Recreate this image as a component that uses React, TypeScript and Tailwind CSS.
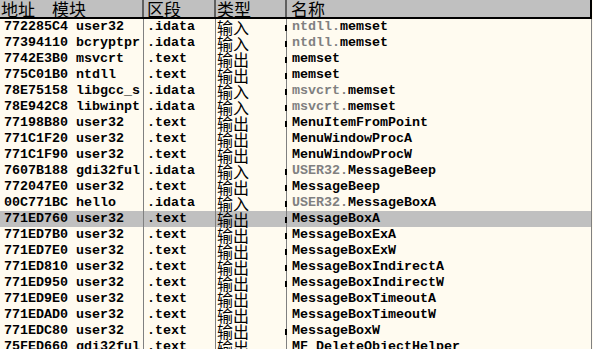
const rows = [
  { addr: "772285C4 user32", sec: ".idata", type: "输入", pre: "ntdll.", name: "memset", tick: true },
  { addr: "77394110 bcryptpr", sec: ".idata", type: "输入", pre: "ntdll.", name: "memset", tick: true },
  { addr: "7742E3B0 msvcrt", sec: ".text", type: "输出", pre: "", name: "memset", tick: true },
  { addr: "775C01B0 ntdll", sec: ".text", type: "输出", pre: "", name: "memset", tick: true },
  { addr: "78E75158 libgcc_s", sec: ".idata", type: "输入", pre: "msvcrt.", name: "memset", tick: true },
  { addr: "78E942C8 libwinpt", sec: ".idata", type: "输入", pre: "msvcrt.", name: "memset", tick: true },
  { addr: "77198B80 user32", sec: ".text", type: "输出", pre: "", name: "MenuItemFromPoint", tick: true },
  { addr: "771C1F20 user32", sec: ".text", type: "输出", pre: "", name: "MenuWindowProcA", tick: false },
  { addr: "771C1F90 user32", sec: ".text", type: "输出", pre: "", name: "MenuWindowProcW", tick: false },
  { addr: "7607B188 gdi32ful", sec: ".idata", type: "输入", pre: "USER32.", name: "MessageBeep", tick: true },
  { addr: "772047E0 user32", sec: ".text", type: "输出", pre: "", name: "MessageBeep", tick: true },
  { addr: "00C771BC hello", sec: ".idata", type: "输入", pre: "USER32.", name: "MessageBoxA", tick: true },
  { addr: "771ED760 user32", sec: ".text", type: "输出", pre: "", name: "MessageBoxA", tick: true, sel: true },
  { addr: "771ED7B0 user32", sec: ".text", type: "输出", pre: "", name: "MessageBoxExA", tick: true },
  { addr: "771ED7E0 user32", sec: ".text", type: "输出", pre: "", name: "MessageBoxExW", tick: true },
  { addr: "771ED810 user32", sec: ".text", type: "输出", pre: "", name: "MessageBoxIndirectA", tick: true },
  { addr: "771ED950 user32", sec: ".text", type: "输出", pre: "", name: "MessageBoxIndirectW", tick: true },
  { addr: "771ED9E0 user32", sec: ".text", type: "输出", pre: "", name: "MessageBoxTimeoutA", tick: false },
  { addr: "771EDAD0 user32", sec: ".text", type: "输出", pre: "", name: "MessageBoxTimeoutW", tick: false },
  { addr: "771EDC80 user32", sec: ".text", type: "输出", pre: "", name: "MessageBoxW", tick: true },
  { addr: "75FED660 gdi32ful", sec: ".text", type: "输出", pre: "", name: "MF_DeleteObjectHelper", tick: false },
];

const mono = "font-['Liberation_Mono',monospace] font-bold text-[13.33px]";
const cjk = "font-['Noto_Sans_CJK_SC',sans-serif]";

export default function App() {
  return (
    <div className="w-[593px] h-[349px] overflow-hidden bg-[#fffbf0]">
      {/* Header */}
      <div className={`flex w-[592px] h-[19px] bg-[#c0c0c0] border-b-2 border-r-2 border-black text-black text-[17px] leading-[17px] ${cjk}`}>
        <div className="flex w-[144px] border-r-2 border-[#606060] pl-[1px]">
          <span>地址</span>
          <span className="ml-[17px]">模块</span>
        </div>
        <div className="w-[72px] border-r-2 border-[#606060] pl-[3px]">区段</div>
        <div className="w-[71px] border-r-2 border-[#606060] pl-[1px]">类型</div>
        <div className="flex-1 pl-[4px]">名称</div>
      </div>

      {/* Rows */}
      {rows.map((r) => (
        <div
          key={r.addr}
          className={`flex w-[592px] h-[16px] border-r border-[#808080] ${r.sel ? "bg-[#c0c0c0]" : ""}`}
        >
          <div className={`w-[144px] border-r border-[#808080] pl-[4px] leading-[16px] whitespace-pre overflow-hidden ${mono}`}>
            {r.addr}
          </div>
          <div className={`w-[72px] border-r border-[#808080] pl-[3px] leading-[16px] ${mono}`}>{r.sec}</div>
          <div className={`w-[71px] border-r border-[#808080] pl-[1px] text-[16px] leading-[16px] whitespace-nowrap ${cjk}`}>
            {r.type}
          </div>
          <div className={`relative flex-1 pl-[5px] leading-[16px] whitespace-nowrap ${mono}`}>
            {r.tick && <span className="absolute left-[-2px] top-[6px] w-[2px] h-[6px] bg-black" />}
            {r.pre && <span className="text-[#808080]">{r.pre}</span>}
            <span className="text-black">{r.name}</span>
          </div>
        </div>
      ))}
    </div>
  );
}
